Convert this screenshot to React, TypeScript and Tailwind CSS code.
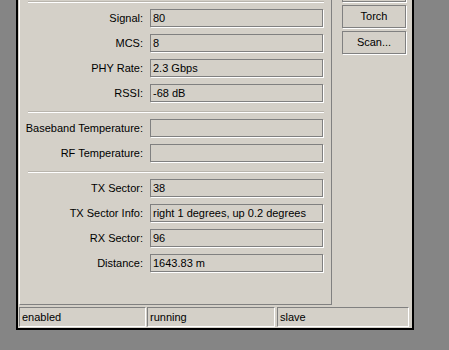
const fields1 = [
  { label: 'Signal:', value: '80' },
  { label: 'MCS:', value: '8' },
  { label: 'PHY Rate:', value: '2.3 Gbps' },
  { label: 'RSSI:', value: '-68 dB' },
];

const fields2 = [
  { label: 'Baseband Temperature:', value: '' },
  { label: 'RF Temperature:', value: '' },
];

const fields3 = [
  { label: 'TX Sector:', value: '38' },
  { label: 'TX Sector Info:', value: 'right 1 degrees, up 0.2 degrees' },
  { label: 'RX Sector:', value: '96' },
  { label: 'Distance:', value: '1643.83 m' },
];

function Separator({ top }: { top: string }) {
  return <div className={`${top} ml-[8px] w-[296px] h-[2px] border-t border-t-[#b9b5ad] border-b border-b-white`} />;
}

function Field({ label, value, first }: { label: string; value: string; first?: boolean }) {
  return (
    <div className={`flex items-center ${first ? 'mt-[6px]' : 'mt-[7px]'}`}>
      <div className="w-[123px] text-right leading-[18px] whitespace-nowrap">{label}</div>
      <div className="ml-[7px] w-[173px] h-[18px] border border-[#808080] shadow-[1px_1px_0_#ffffff] pl-[2px] leading-[16px] whitespace-nowrap overflow-hidden">
        {value}
      </div>
    </div>
  );
}

function Group({ items }: { items: { label: string; value: string }[] }) {
  return (
    <>
      {items.map((f, i) => (
        <Field key={f.label} label={f.label} value={f.value} first={i === 0} />
      ))}
    </>
  );
}

export default function App() {
  return (
    <div
      className="w-[449px] h-[350px] bg-[#858585] overflow-hidden text-[11px] text-black"
      style={{ fontFamily: '"Liberation Sans", Arial, sans-serif' }}
    >
      <div className="ml-[16px] w-[398px] h-[330px] bg-[#d4d0c8] border-l-2 border-r-2 border-b-2 border-black flex flex-col">
        <div className="flex h-[305px]">
          {/* Tab page */}
          <div className="ml-[1px] w-[313px] h-[305px] border-l border-l-white border-r border-r-[#808080] border-b border-b-[#808080]">
            <div className="pt-[1px]" />
            <Separator top="" />
            <Group items={fields1} />
            <Separator top="mt-[9px]" />
            <Group items={fields2} />
            <Separator top="mt-[9px]" />
            <Group items={fields3} />
          </div>

          {/* Buttons */}
          <div className="ml-[10px] w-[64px] flex flex-col">
            <div className="-mt-[21px] h-[23px] border border-[#808080] shadow-[1px_1px_0_#ffffff]" />
            <div className="mt-[3px] h-[23px] border border-[#808080] shadow-[1px_1px_0_#ffffff] flex items-center justify-center">
              Torch
            </div>
            <div className="mt-[3px] h-[23px] border border-[#808080] shadow-[1px_1px_0_#ffffff] flex items-center justify-center">
              Scan...
            </div>
          </div>
        </div>

        {/* Status bar */}
        <div className="mt-[2px] ml-[1px] flex h-[20px]">
          <div className="w-[127px] border-t border-l border-[#808080] border-b border-b-white border-r border-r-white pl-[2px] leading-[18px]">
            enabled
          </div>
          <div className="ml-[1px] w-[128px] border-t border-l border-[#808080] border-b border-b-white border-r border-r-white pl-[2px] leading-[18px]">
            running
          </div>
          <div className="ml-[2px] w-[132px] border-t border-l border-[#808080] border-b border-b-white border-r border-r-white pl-[2px] leading-[18px]">
            slave
          </div>
        </div>
      </div>
    </div>
  );
}
